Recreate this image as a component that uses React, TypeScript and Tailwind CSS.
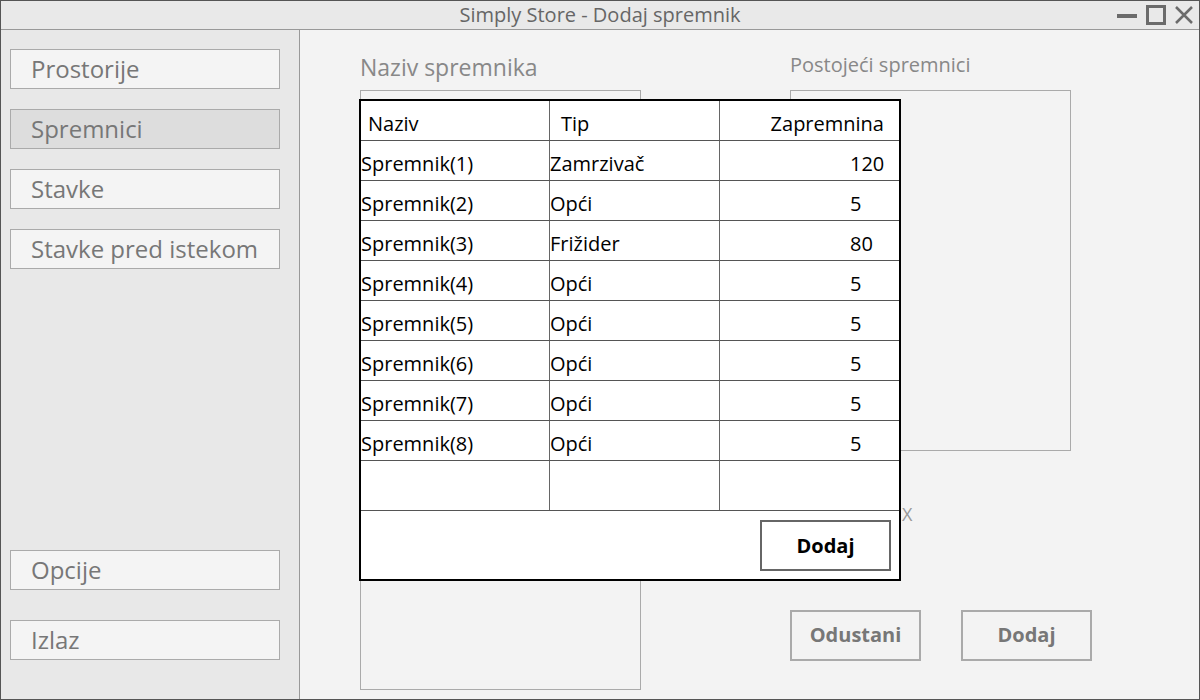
import React from "react";

const rows = [
  { name: "Spremnik(1)", type: "Zamrzivač", vol: "120" },
  { name: "Spremnik(2)", type: "Opći", vol: "5" },
  { name: "Spremnik(3)", type: "Frižider", vol: "80" },
  { name: "Spremnik(4)", type: "Opći", vol: "5" },
  { name: "Spremnik(5)", type: "Opći", vol: "5" },
  { name: "Spremnik(6)", type: "Opći", vol: "5" },
  { name: "Spremnik(7)", type: "Opći", vol: "5" },
  { name: "Spremnik(8)", type: "Opći", vol: "5" },
];

const SideButton: React.FC<{ label: string; active?: boolean }> = ({ label, active }) => (
  <div
    className={`h-[40px] w-[270px] border border-[#aaa] flex items-center pl-[20px] text-[24px] leading-none text-[#777] ${
      active ? "bg-[#dddddd]" : "bg-[#f4f4f4]"
    }`}
  >
    {label}
  </div>
);

const App: React.FC = () => {
  return (
    <div
      className="w-[1200px] h-[700px] border border-[#555] flex flex-col bg-[#f3f3f3] overflow-hidden"
      style={{ fontFamily: '"Open Sans", sans-serif' }}
    >
      {/* Title bar */}
      <div className="h-[29px] shrink-0 bg-[#e9e9e9] border-b border-[#999] flex items-center relative">
        <div className="flex-1 text-center text-[20px] text-[#666] leading-none">Simply Store - Dodaj spremnik</div>
        <div className="absolute right-[6px] top-[4px] flex items-center gap-[9px]">
          <svg width="20" height="20" viewBox="0 0 20 20">
            <rect x="0" y="9" width="20" height="4" fill="#6b6b6b" />
          </svg>
          <svg width="20" height="20" viewBox="0 0 20 20">
            <rect x="1.5" y="1.5" width="17" height="17" fill="none" stroke="#6b6b6b" strokeWidth="3" />
          </svg>
          <svg width="18" height="18" viewBox="0 0 18 18">
            <path d="M1 1 L17 17 M17 1 L1 17" stroke="#6b6b6b" strokeWidth="2.5" />
          </svg>
        </div>
      </div>

      <div className="flex flex-1 min-h-0">
        {/* Sidebar */}
        <div className="w-[299px] shrink-0 bg-[#e8e8e8] border-r border-[#999] flex flex-col pl-[9px] pt-[19px] pb-[39px]">
          <div className="flex flex-col gap-[20px]">
            <SideButton label="Prostorije" />
            <SideButton label="Spremnici" active />
            <SideButton label="Stavke" />
            <SideButton label="Stavke pred istekom" />
          </div>
          <div className="mt-auto flex flex-col gap-[30px]">
            <SideButton label="Opcije" />
            <SideButton label="Izlaz" />
          </div>
        </div>

        {/* Main */}
        <div className="flex-1 relative flex pl-[60px] pt-[24px]">
          <div className="w-[281px] flex flex-col">
            <div className="text-[23px] text-[#888] h-[36px] leading-[26px]">Naziv spremnika</div>
            <div className="w-[281px] h-[600px] border border-[#aaa]" />
          </div>
          <div className="ml-[149px] flex flex-col">
            <div className="text-[20px] text-[#888] h-[36px] leading-[22px]">Postojeći spremnici</div>
            <div className="w-[281px] h-[361px] border border-[#aaa]" />
            <div className="mt-[159px] flex gap-[40px]">
              <div className="w-[131px] h-[51px] border-2 border-[#aaa] flex items-center justify-center text-[20px] leading-none pb-[2px] font-bold text-[#777]">
                Odustani
              </div>
              <div className="w-[131px] h-[51px] border-2 border-[#aaa] flex items-center justify-center text-[20px] leading-none pb-[2px] font-bold text-[#777]">
                Dodaj
              </div>
            </div>
          </div>

          {/* Popup table */}
          <div className="absolute left-[59px] top-[69px] w-[542px] h-[482px] border-2 border-black bg-white flex flex-col text-[20px] text-black">
            <div className="h-[40px] flex border-b border-[#555]">
              <div className="w-[189px] border-r border-[#666] pl-[7px] pt-[11px] leading-[24px]">Naziv</div>
              <div className="w-[170px] border-r border-[#666] pl-[11px] pt-[11px] leading-[24px]">Tip</div>
              <div className="flex-1 text-right pr-[15px] pt-[11px] leading-[24px]">Zapremnina</div>
            </div>
            {rows.map((r) => (
              <div key={r.name} className="h-[40px] flex border-b border-[#555]">
                <div className="w-[189px] border-r border-[#666] pt-[11px] leading-[24px]">{r.name}</div>
                <div className="w-[170px] border-r border-[#666] pt-[11px] leading-[24px]">{r.type}</div>
                <div className="flex-1 pl-[130px] pt-[11px] leading-[24px]">{r.vol}</div>
              </div>
            ))}
            <div className="h-[50px] flex border-b border-[#555]">
              <div className="w-[189px] border-r border-[#666]" />
              <div className="w-[170px] border-r border-[#666]" />
              <div className="flex-1" />
            </div>
            <div className="flex-1 flex justify-end items-start pt-[9px] pr-[8px]">
              <div className="w-[131px] h-[51px] border-2 border-[#666] flex items-center justify-center font-bold text-[20px] text-black">
                Dodaj
              </div>
            </div>
            <div className="absolute left-[541px] top-[404px] text-[18px] text-[#999] leading-none">X</div>
          </div>
        </div>
      </div>
    </div>
  );
};

export default App;
